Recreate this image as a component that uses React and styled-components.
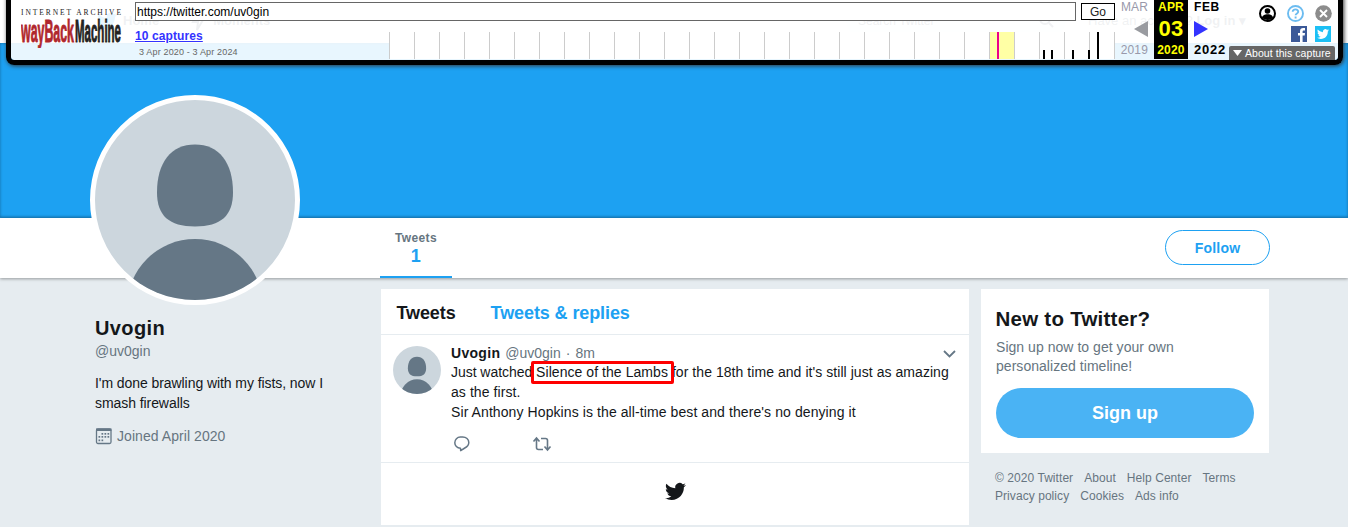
import React from "react";
import styled, { createGlobalStyle } from "styled-components";

const Global = createGlobalStyle`
  * { box-sizing: border-box; }
  body { margin: 0; background: #e6ecf0; font-family: Arial, "Liberation Sans", sans-serif; overflow: hidden; }
  a { color: inherit; text-decoration: none; }
  h1, h2, p { margin: 0; }
`;

const Page = styled.div`
  position: relative;
  width: 1348px;
  height: 527px;
  overflow: hidden;
  background: #e6ecf0;
  color: #14171a;
  font-size: 14px;
  line-height: 20px;
`;

/* ---------- site header ---------- */
const SiteNav = styled.nav`
  display: flex;
  align-items: center;
  height: 43px;
  padding: 0 109px 2px 97px;
  background: #fff;
  color: #667580;
  font-size: 13px;
  font-weight: bold;
`;
const NavItem = styled.a`
  display: flex;
  align-items: center;
  gap: 6px;
  margin-right: 30px;
`;
const NavSearch = styled.div`
  display: flex;
  justify-content: space-between;
  align-items: center;
  width: 220px;
  height: 32px;
  margin-left: auto;
  padding: 0 12px;
  border-radius: 16px;
  background: #f5f8fa;
  font-size: 12px;
  font-weight: normal;
`;
const NavLogin = styled.div`
  width: 151px;
  margin-left: 22px;
  font-weight: normal;
  white-space: nowrap;
`;

/* ---------- profile header ---------- */
const Cover = styled.div`
  height: 175px;
  background: #1da1f2;
  border-bottom: 1px solid #1883c6;
  box-shadow: inset 0 0 3px rgba(0, 0, 0, 0.35);
`;
const ProfileBar = styled.div`
  position: relative;
  display: flex;
  justify-content: space-between;
  align-items: flex-start;
  height: 60px;
  padding: 0 78px 0 380px;
  background: #fff;
  box-shadow: 0 1px 3px rgba(0, 0, 0, 0.35);
`;
const Stat = styled.a`
  width: 72px;
  height: 60px;
  padding-top: 12px;
  border-bottom: 2px solid #1da1f2;
  color: #667580;
  text-align: center;
  font-size: 12px;
  font-weight: bold;
  line-height: 16px;
  letter-spacing: 0.35px;
`;
const StatValue = styled.div`
  color: #1da1f2;
  font-size: 18px;
  line-height: 20px;
`;
const FollowButton = styled.button`
  width: 105px;
  height: 35px;
  margin-top: 12px;
  padding: 0;
  border: 1px solid #1da1f2;
  border-radius: 18px;
  background: #fff;
  color: #1da1f2;
  font: bold 14px Arial, "Liberation Sans", sans-serif;
  letter-spacing: 0.2px;
`;
const BigAvatar = styled.div`
  position: absolute;
  left: 90px;
  top: -123px;
  width: 210px;
  height: 210px;
  border: 5px solid #fff;
  border-radius: 50%;
  overflow: hidden;
  background: #ccd6dd;
`;

/* ---------- content columns ---------- */
const Columns = styled.main`
  display: grid;
  grid-template-columns: 286px 588px 288px;
  align-items: start;
  padding: 11px 0 0 95px;
  & > :nth-child(3) { margin-left: 12px; width: 288px; }
`;
const Bio = styled.aside`
  padding: 27px 50px 0 0;
`;
const Name = styled.h1`
  font-size: 20px;
  line-height: 24px;
  letter-spacing: 0.4px;
`;
const Handle = styled.div`
  color: #667580;
  line-height: 22px;
`;
const BioText = styled.p`
  margin-top: 11px;
  letter-spacing: -0.07px;
`;
const Joined = styled.div`
  display: flex;
  align-items: center;
  gap: 4px;
  margin-top: 13px;
  color: #667580;
  letter-spacing: 0.06px;
`;
const Stream = styled.section`
  height: 236px;
  background: #fff;
`;
const Tabs = styled.div`
  display: flex;
  gap: 35px;
  height: 46px;
  padding: 0 15.5px;
  border-bottom: 1px solid #e6ecf0;
  font-size: 18px;
  font-weight: bold;
  line-height: 48px;
  letter-spacing: -0.1px;
`;
const Tab = styled.a`
  color: ${(p) => (p.$active ? "#14171a" : "#1da1f2")};
`;
const Tweet = styled.article`
  display: flex;
  gap: 10px;
  height: 128px;
  padding: 9px 12.5px 0 12px;
  border-bottom: 1px solid #e6ecf0;
`;
const SmallAvatar = styled.div`
  flex: none;
  width: 48px;
  height: 48px;
  margin-top: 2px;
  border-radius: 50%;
  overflow: hidden;
  background: #ccd6dd;
`;
const TweetBody = styled.div`
  flex: 1;
  white-space: nowrap;
`;
const TweetHead = styled.div`
  display: flex;
  align-items: center;
  gap: 5px;
  height: 18px;
  color: #667580;
  strong { color: #14171a; letter-spacing: 0.3px; }
  svg { margin: 2px 0 0 auto; }
`;
const TweetLine = styled.span`
  display: block;
  letter-spacing: ${(p) => p.$track}px;
`;
const Lead = styled.span`
  letter-spacing: -0.04px;
`;
const Marked = styled.span`
  position: relative;
  &::after {
    content: "";
    position: absolute;
    inset: -3px -6px -4px -5px;
    border: 3px solid #fe0000;
    border-radius: 2px;
  }
`;
const Actions = styled.div`
  display: flex;
  align-items: center;
  gap: 61px;
  margin-top: 13px;
  padding-left: 2px;
`;
const StreamEnd = styled.div`
  display: flex;
  justify-content: center;
  padding-top: 18px;
`;
const Card = styled.div`
  height: 164px;
  padding: 18px 15px 0;
  background: #fff;
  color: #667580;
  line-height: 19px;
  letter-spacing: 0.04px;
`;
const CardTitle = styled.h2`
  margin: 0 0 7px -0.5px;
  color: #14171a;
  font-size: 20.5px;
  line-height: 24px;
  letter-spacing: 0.25px;
`;
const SignUp = styled.button`
  display: block;
  width: 258px;
  height: 50px;
  margin-top: 12px;
  border: 0;
  border-radius: 25px;
  background: #4ab3f4;
  color: #fff;
  font: bold 18px Arial, "Liberation Sans", sans-serif;
`;
const Footer = styled.footer`
  display: flex;
  flex-wrap: wrap;
  gap: 0 11px;
  width: 260px;
  padding: 16px 0 0 14px;
  color: #667580;
  font-size: 12px;
  line-height: 18px;
  letter-spacing: 0.06px;
`;

/* ---------- archive toolbar ---------- */
const Toolbar = styled.header`
  position: absolute;
  z-index: 5;
  left: 6px;
  top: -5px;
  display: flex;
  width: 1337px;
  height: 70px;
  padding-top: 5px;
  border: 5px solid #000;
  border-top: 0;
  border-radius: 0 0 8px 8px;
  box-shadow: 1px 1px 4px #333;
  background: rgba(255, 255, 255, 0.9);
  background-clip: padding-box;
`;
const Brand = styled.a`
  width: 124px;
  padding: 8px 0 0 10px;
`;
const Timeline = styled.div`
  width: 982px;
`;
const UrlRow = styled.div`
  display: flex;
  align-items: flex-start;
  gap: 5px;
  padding-top: 2px;
`;
const UrlInput = styled.input`
  width: 941px;
  height: 19px;
  padding: 0 1px;
  border: 1px solid #666;
  outline: 0;
  background: #fff;
  color: #000;
  font: 12px Arial, "Liberation Sans", sans-serif;
`;
const GoButton = styled.button`
  width: 34px;
  height: 17px;
  margin-top: 1px;
  padding: 0;
  border: 1px solid #000;
  background: #fff;
  color: #222;
  font: 12px/14px Arial, "Liberation Sans", sans-serif;
`;
const CaptureRow = styled.div`
  display: flex;
`;
const Captures = styled.div`
  width: 254px;
  padding-top: 7px;
  a { display: block; color: #33f; font-size: 12px; font-weight: bold; line-height: 16px; text-decoration: underline; letter-spacing: 0.1px; }
  span { display: block; padding-left: 4px; color: #666; font-size: 9px; line-height: 16px; letter-spacing: 0.16px; }
`;
const Spark = styled.svg`
  display: block;
  margin-top: 11px;
`;
const DateColumn = styled.div`
  display: grid;
  grid-template-rows: 14px 29px 14px;
  align-items: center;
  width: ${(p) => p.$width}px;
  height: 59px;
  justify-items: ${(p) => p.$align || "center"};
  padding: ${(p) => p.$pad || "0"};
  background: ${(p) => (p.$current ? "#000" : "transparent")};
  color: ${(p) => p.$color};
  font-size: 12px;
  font-weight: ${(p) => (p.$light ? "normal" : "bold")};
  line-height: 14px;
  letter-spacing: ${(p) => p.$track || 0}px;
`;
const Day = styled.div`
  font-size: 22px;
  line-height: 30px;
`;
const FutureYear = styled.span`
  font-size: 13px;
  letter-spacing: 0.8px;
`;
const Tools = styled.div`
  display: flex;
  flex-direction: column;
  align-items: flex-end;
  flex: 1;
  padding: 4px 3px 0 0;
`;
const IconRow = styled.div`
  display: flex;
  align-items: center;
  gap: ${(p) => p.$gap}px;
  height: ${(p) => p.$height}px;
  padding-right: ${(p) => p.$inset}px;
`;
const About = styled.div`
  display: flex;
  align-items: center;
  gap: 3px;
  width: 106px;
  height: 14px;
  padding: 1px 4px 0;
  border-radius: 2px 2px 0 0;
  background: #666;
  color: #fff;
  font-size: 10.5px;
  line-height: 13px;
  letter-spacing: 0.06px;
  white-space: nowrap;
`;

const Person = () => (
  <svg viewBox="0 0 200 200" width="100%" height="100%" style={{ display: "block" }}>
    <path fill="#657786" d="M100 44.5c24 0 38 18 38 48 0 23-12 34-38 34s-38-11-38-34c0-30 14-48 38-48z" />
    <ellipse cx="100" cy="207" rx="68" ry="68" fill="#657786" />
  </svg>
);

const Bird = ({ size, color }) => (
  <svg width={size} height={size} viewBox="0 0 24 24" fill={color}>
    <path d="M23.953 4.570a10 10 0 01-2.825.775 4.958 4.958 0 002.163-2.723c-.951.555-2.005.959-3.127 1.184a4.920 4.920 0 00-8.384 4.482C7.690 8.095 4.067 6.130 1.640 3.162a4.822 4.822 0 00-.666 2.475c0 1.710.870 3.213 2.188 4.096a4.904 4.904 0 01-2.228-.616v.060a4.923 4.923 0 003.946 4.827 4.996 4.996 0 01-2.212.085 4.936 4.936 0 004.604 3.417 9.867 9.867 0 01-6.102 2.105c-.390 0-.779-.023-1.170-.067a13.995 13.995 0 007.557 2.209c9.053 0 13.998-7.496 13.998-13.985 0-.210 0-.420-.015-.630A9.935 9.935 0 0024 4.590z" />
  </svg>
);

const WaybackLogo = () => (
  <svg width="102" height="40" viewBox="0 0 102 40">
    <text x="0" y="7" fontFamily="Liberation Serif, serif" fontSize="7.5" fill="#222" textLength="100">INTERNET ARCHIVE</text>
    <g fontFamily="Liberation Sans Narrow, Liberation Sans, sans-serif" fontWeight="bold" fontSize="16" strokeWidth="0.5">
      <text transform="translate(0 34) scale(1 1.950)" textLength="53" lengthAdjust="spacingAndGlyphs" fill="#b0272d" stroke="#b0272d">wayBack</text>
      <text transform="translate(54 34) scale(1 1.950)" textLength="46" lengthAdjust="spacingAndGlyphs" fill="#222" stroke="#222">Machine</text>
    </g>
  </svg>
);

const months = Array.from({ length: 30 }, (_, i) => i * 25);
const bars = [[654, 9], [662, 9], [683, 9], [699, 9], [708, 27]];

export default function App() {
  return (
    <Page>
      <Global />
      <SiteNav>
        <NavItem><Bird size={20} color="#1da1f2" />Home</NavItem>
        <NavItem>
          <svg width="18" height="20" viewBox="0 0 18 20" fill="none" stroke="#667580" strokeWidth="2"><path d="M10 2L4 11h5l-1 8 6-10H9z" /></svg>
          Moments
        </NavItem>
        <NavSearch>
          Search Twitter
          <svg width="15" height="15" viewBox="0 0 15 15" fill="none" stroke="#667580" strokeWidth="2"><circle cx="6" cy="6" r="5" /><path d="M10 10l4 4" /></svg>
        </NavSearch>
        <NavLogin>Have an account? <b>Log in ▾</b></NavLogin>
      </SiteNav>
      <Cover />
      <ProfileBar>
        <BigAvatar><Person /></BigAvatar>
        <Stat>Tweets<StatValue>1</StatValue></Stat>
        <FollowButton>Follow</FollowButton>
      </ProfileBar>

      <Columns>
        <Bio>
          <Name>Uvogin</Name>
          <Handle>@uv0gin</Handle>
          <BioText>I'm done brawling with my fists, now I smash firewalls</BioText>
          <Joined>
            <svg width="18" height="18" viewBox="0 0 18 18">
              <rect x="1.500" y="2" width="14.500" height="14.500" rx="1.500" fill="none" stroke="#657786" strokeWidth="1.300" />
              <path d="M1 1.500h15.500v2.500H1z" fill="#657786" />
              <g fill="#657786">
                {[[7, 6], [10, 6], [13, 6], [4, 9], [7, 9], [10, 9], [13, 9], [4, 12.5], [7, 12.5]].map(([x, y]) => (
                  <rect key={`${x}-${y}`} x={x - 0.5} y={y} width="1.700" height="1.700" />
                ))}
              </g>
            </svg>
            Joined April 2020
          </Joined>
        </Bio>

        <Stream>
          <Tabs>
            <Tab $active>Tweets</Tab>
            <Tab>Tweets &amp; replies</Tab>
          </Tabs>
          <Tweet>
            <SmallAvatar><Person /></SmallAvatar>
            <TweetBody>
              <TweetHead>
                <strong>Uvogin</strong>
                <span>@uv0gin</span>
                <span>·</span>
                <span>8m</span>
                <svg width="15" height="10" viewBox="0 0 15 10" fill="none" stroke="#657786" strokeWidth="1.800"><path d="M2 2l5.500 5.500L13 2" /></svg>
              </TweetHead>
              <p>
                <TweetLine $track={0.055}>
                  <Lead>Just watched </Lead><Marked>Silence of the Lambs</Marked> for the 18th time and it's still just as amazing
                </TweetLine>
                <TweetLine $track={0.07}>as the first.</TweetLine>
                <TweetLine $track={0.09}>Sir Anthony Hopkins is the all-time best and there's no denying it</TweetLine>
              </p>
              <Actions>
                <svg width="18" height="18" viewBox="0 0 18 18" fill="none" stroke="#657786" strokeWidth="1.500">
                  <path d="M7.500 13.200C4 13.200 1.800 10.600 1.800 7.700 1.800 4.500 4.300 2 7.300 2h2.400c3.400 0 6.100 2.300 6.100 5.400 0 2.800-1.700 4.300-4 5.600L7.700 15.700z" strokeLinejoin="round" />
                </svg>
                <svg width="20" height="16" viewBox="0 0 20 16" fill="none" stroke="#657786" strokeWidth="1.600">
                  <path d="M1.500 5.500l3-3.500 3 3.500M4.500 2.500v9q0 2 2 2H11M9 2.500h4.500q2 0 2 2v9M12.500 10.500l3 3.500 3-3.500" />
                </svg>
              </Actions>
            </TweetBody>
          </Tweet>
          <StreamEnd><Bird size={21} color="#14171a" /></StreamEnd>
        </Stream>

        <aside>
          <Card>
            <CardTitle>New to Twitter?</CardTitle>
            <p>Sign up now to get your own<br />personalized timeline!</p>
            <SignUp>Sign up</SignUp>
          </Card>
          <Footer>
            {["© 2020 Twitter", "About", "Help Center", "Terms", "Privacy policy", "Cookies", "Ads info"].map((t) => <a key={t}>{t}</a>)}
          </Footer>
        </aside>
      </Columns>

      <Toolbar>
        <Brand><WaybackLogo /></Brand>
        <Timeline>
          <UrlRow>
            <UrlInput readOnly value="https://twitter.com/uv0gin" />
            <GoButton>Go</GoButton>
          </UrlRow>
          <CaptureRow>
            <Captures>
              <a>10 captures</a>
              <span>3 Apr 2020 - 3 Apr 2024</span>
            </Captures>
            <Spark width="726" height="28" viewBox="0 0 726 28">
              <rect width="726" height="27" fill="#fff" />
              <rect x="600" width="25" height="27" fill="#ffffa5" />
              {months.map((x) => <rect key={x} x={x} width="1" height="27" fill="#ccc" />)}
              <rect x="608" width="2" height="27" fill="#ec008c" />
              {bars.map(([x, h]) => <rect key={x} x={x} y={27 - h} width="2" height={h} />)}
            </Spark>
          </CaptureRow>
        </Timeline>
        <DateColumn $width={37} $light $color="#99a" $align="end" $pad="0 6px 0 0" $track={0.15}>
          <span>MAR</span>
          <svg width="14" height="16"><path d="M14 0v16L0 8z" fill="#999ba0" /></svg>
          <span>2019</span>
        </DateColumn>
        <DateColumn $width={34} $color="#ff0" $current $track={0.2}>
          <span>APR</span>
          <Day>03</Day>
          <span>2020</span>
        </DateColumn>
        <DateColumn $width={38} $color="#000" $align="start" $pad="0 0 0 6px" $track={0.6}>
          <span>FEB</span>
          <svg width="14" height="16"><path d="M0 0v16l14-8z" fill="#33f" /></svg>
          <FutureYear>2022</FutureYear>
        </DateColumn>
        <Tools>
          <IconRow $gap={11} $height={18} $inset={3}>
            <svg width="17" height="17" viewBox="0 0 17 17"><circle cx="8.500" cy="8.500" r="7.500" fill="#fff" stroke="#000" strokeWidth="2" /><circle cx="8.500" cy="6" r="2.800" /><path d="M3 13c0-5 11-5 11 0q-5.500 4-11 0z" /></svg>
            <svg width="17" height="17" viewBox="0 0 17 17"><circle cx="8.500" cy="8.500" r="7.500" fill="none" stroke="#6cbcf0" strokeWidth="1.900" /><path d="M5.700 6.700c0-3.300 5.500-3 5.500 0 0 1.700-2.600 1.800-2.600 3.600M8.600 11.500v2" fill="none" stroke="#6cbcf0" strokeWidth="1.900" /></svg>
            <svg width="17" height="17" viewBox="0 0 17 17"><circle cx="8.500" cy="8.500" r="8.300" fill="#8c8c8c" /><path d="M5 5l7 7M12 5l-7 7" stroke="#fff" strokeWidth="1.900" /></svg>
          </IconRow>
          <IconRow $gap={8} $height={24} $inset={4}>
            <svg width="16" height="16" viewBox="0 0 16 16"><path fill="#3b5998" d="M0 0h16v16H0z" /><path fill="#fff" d="M9 16V9.500H7V7h2V5.200C9 3 10.300 2 12.200 2H14v2.400h-1.200c-.9 0-1.200.4-1.200 1.200V7H14l-.3 2.500h-2.100V16z" /></svg>
            <svg width="16" height="16" viewBox="0 0 16 16"><path fill="#1cc0f5" d="M0 0h16v16H0z" /><g transform="translate(2 2)"><Bird size={12} color="#fff" /></g></svg>
          </IconRow>
          <About>
            <svg width="9" height="7"><path d="M0 0h9L4.500 6z" fill="#fff" /></svg>
            About this capture
          </About>
        </Tools>
      </Toolbar>
    </Page>
  );
}
